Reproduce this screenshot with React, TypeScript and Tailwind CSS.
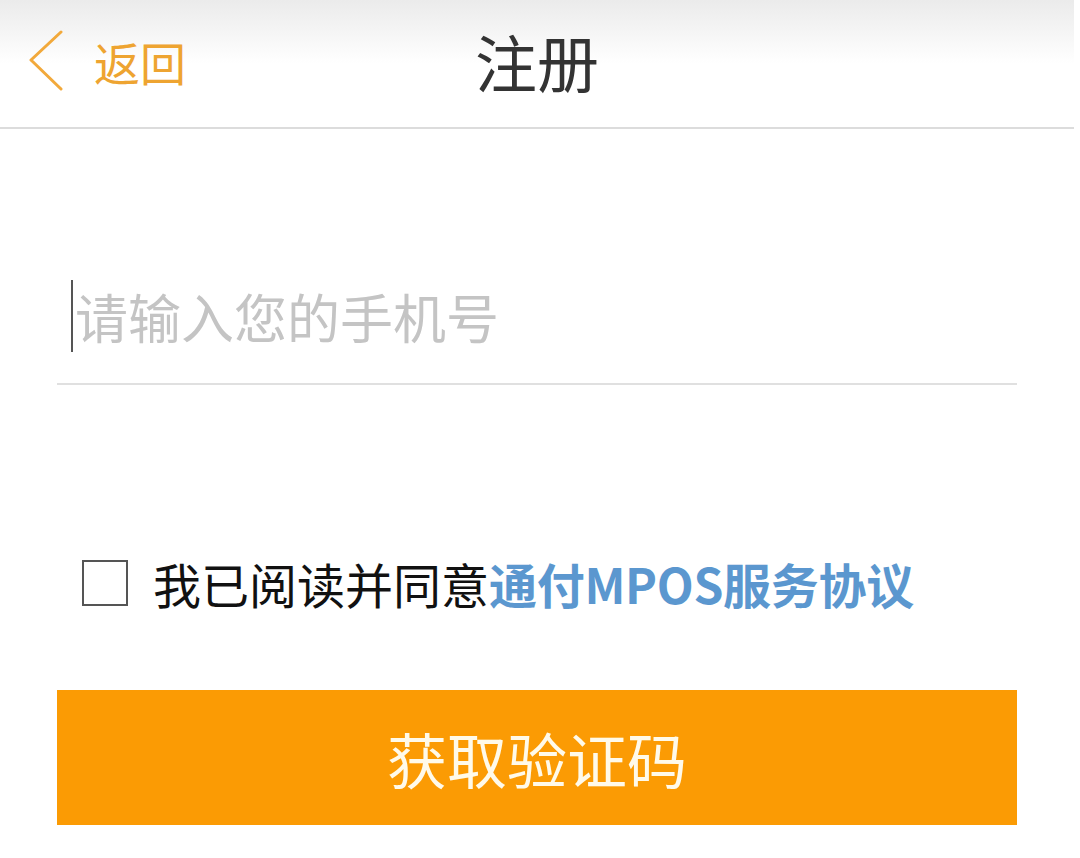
import React from 'react';

const cjk = { fontFamily: '"Noto Sans CJK SC", "Noto Sans", sans-serif' };

// 返回箭头
function BackChevron() {
  return (
    <svg width="36" height="62" viewBox="0 0 36 62" fill="none">
      <polyline
        points="33,2 3,30 33,59"
        stroke="#f2a93b"
        strokeWidth="3"
        strokeLinecap="round"
        strokeLinejoin="round"
      />
    </svg>
  );
}

export default function App() {
  return (
    <div className="min-h-[858px] w-full bg-white" style={cjk}>
      <div className="w-[1074px]">
        {/* 顶部导航 */}
        <div className="relative h-[129px] border-b-2 border-[#dcdcdc] bg-gradient-to-b from-[#ebebeb] via-white to-white">
          <div className="grid h-[127px] grid-cols-[1fr_auto_1fr] items-center pb-[6px]">
            <div className="flex items-center pl-[28px]">
              <BackChevron />
              <span className="ml-[30px] text-[46px] leading-none text-[#eea431]">返回</span>
            </div>
            <div className="text-[62px] leading-none text-[#333333]">注册</div>
            <div />
          </div>
        </div>

        <div className="px-[57px]">
          {/* 手机号输入 */}
          <div className="pt-[151px]">
            <div className="flex h-[72px] items-center pl-[14px]">
              <span className="h-[72px] w-[2px] bg-[#555555]" />
              <span className="ml-[2px] text-[53px] leading-none text-[#c4c4c4]">请输入您的手机号</span>
            </div>
            <div className="mt-[31px] h-[2px] bg-[#e0e0e0]" />
          </div>

          {/* 协议 */}
          <div className="mt-[175px] flex h-[46px] items-center pl-[25px]">
            <div className="h-[46px] w-[46px] border-2 border-[#555555] bg-white" />
            <span className="ml-[25px] text-[48px] leading-none text-[#111111]">我已阅读并同意</span>
            <span className="text-[48px] font-bold leading-none tracking-[-0.3px] text-[#5b97cf]">通付MPOS服务协议</span>
          </div>

          {/* 获取验证码 */}
          <button className="mt-[84px] flex h-[135px] w-full items-center justify-center bg-[#fb9b04]">
            <span className="text-[60px] leading-none text-[#fffaea]">获取验证码</span>
          </button>
        </div>
      </div>
    </div>
  );
}
